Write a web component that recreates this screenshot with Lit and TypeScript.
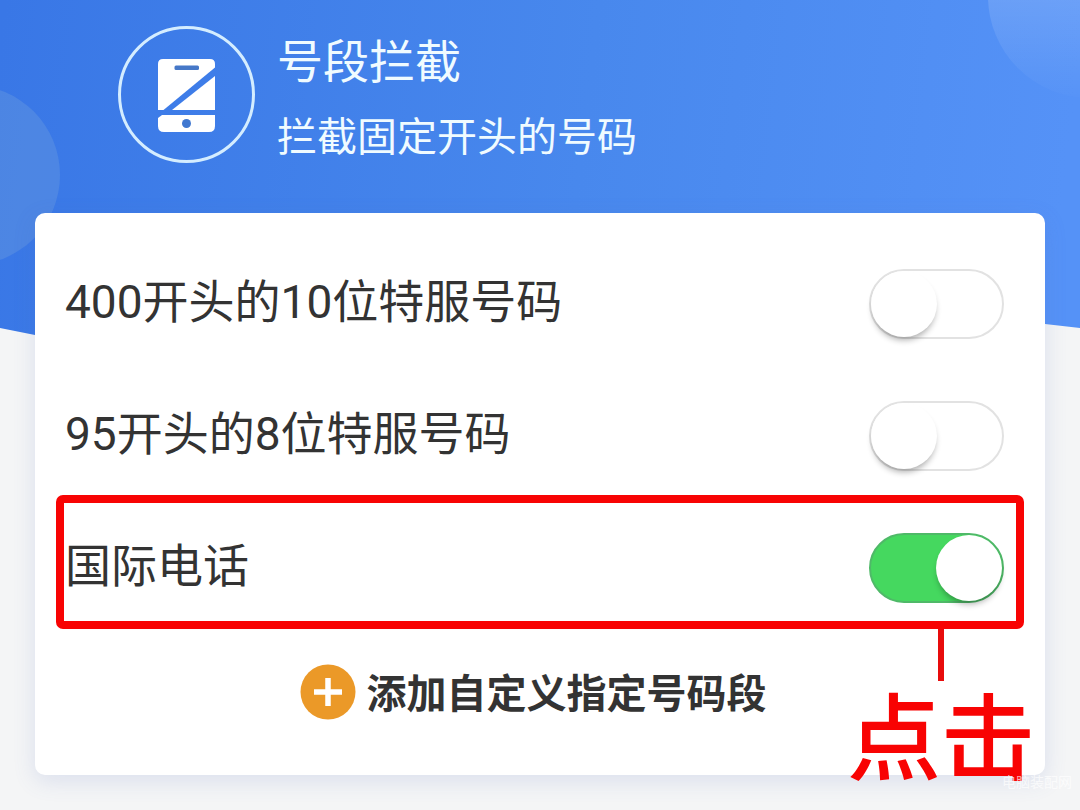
import { LitElement, html, css, svg } from "lit";
import { customElement, property, state } from "lit/decorators.js";

interface Rule {
  id: string;
  label: string;
  on: boolean;
}

@customElement("toggle-row")
class ToggleRow extends LitElement {
  @property() label = "";
  @property({ type: Boolean }) on = false;

  static styles = css`
    :host {
      display: block;
    }
    .row {
      display: flex;
      align-items: center;
      justify-content: space-between;
      height: 132px;
      padding: 0 41px 0 30px;
      cursor: pointer;
    }
    .label {
      padding-bottom: 4px;
      font-size: 46px;
      line-height: 60px;
      color: #333;
    }
    .switch {
      appearance: none;
      display: flex;
      flex: none;
      box-sizing: border-box;
      width: 135px;
      height: 70px;
      margin: 0;
      border: 2px solid #e2e2e2;
      border-radius: 35px;
      background: #fff;
      cursor: pointer;
    }
    .switch::before {
      content: "";
      width: 66px;
      height: 66px;
      border-radius: 50%;
      background: #fff;
      box-shadow: 0 5px 6px -2px rgba(0, 0, 0, 0.32);
    }
    .switch:checked {
      justify-content: flex-end;
      border-color: #4fb968;
      background: #45d85f;
    }
  `;

  private toggle(e: Event) {
    this.on = (e.target as HTMLInputElement).checked;
  }

  render() {
    return html`
      <label class="row">
        <span class="label">${this.label}</span>
        <input class="switch" type="checkbox" role="switch" .checked=${this.on} @change=${this.toggle} />
      </label>
    `;
  }
}

@customElement("app-root")
class AppRoot extends LitElement {
  @state() private rules: Rule[] = [
    { id: "400", label: "400开头的10位特服号码", on: false },
    { id: "95", label: "95开头的8位特服号码", on: false },
    { id: "intl", label: "国际电话", on: true },
  ];

  static styles = css`
    :host {
      display: block;
      font-family: Roboto, "Noto Sans CJK SC", sans-serif;
    }
    .page {
      position: relative;
      box-sizing: border-box;
      min-height: 100vh;
      padding: 26px 35px 35px;
      overflow: hidden;
      background: #f4f5f6;
    }
    .backdrop {
      position: absolute;
      inset: 0 0 auto;
      width: 100%;
      height: 370px;
    }
    .header {
      position: relative;
      display: flex;
      gap: 22px;
      height: 187px;
      padding-left: 83px;
      color: #f0fbff;
    }
    .badge {
      flex: none;
      width: 137px;
      height: 137px;
    }
    .title {
      margin: 6px 0 13px;
      font-size: 46px;
      font-weight: 400;
      line-height: 60px;
    }
    .subtitle {
      margin: 0;
      font-size: 40px;
      line-height: 66px;
    }
    .card {
      position: relative;
      padding: 25px 0 50px;
      border-radius: 10px;
      background: #fff;
      box-shadow: 0 6px 22px rgba(90, 110, 190, 0.16);
    }
    .marked {
      position: relative;
    }
    .marker {
      position: absolute;
      inset: -7px 21px 5px;
      border: 8px solid #f80303;
      border-radius: 7px;
      pointer-events: none;
    }
    .callout {
      position: absolute;
      top: 127px;
      right: 10px;
      display: flex;
      flex-direction: column;
      align-items: center;
      color: #f80303;
      font-size: 94px;
      font-weight: 500;
      line-height: 120px;
      pointer-events: none;
    }
    .callout::before {
      content: "";
      width: 6px;
      height: 52px;
      background: #e80c0c;
    }
    .add {
      display: flex;
      align-items: center;
      gap: 11px;
      margin: 24px auto 0;
      padding: 0 14px 0 0;
      border: 0;
      background: none;
      color: #333;
      font: 700 40px/60px Roboto, "Noto Sans CJK SC", sans-serif;
      cursor: pointer;
    }
    .add-text {
      padding-top: 7px;
    }
    .plus {
      width: 56px;
      height: 56px;
    }
    .watermark {
      position: absolute;
      right: 8px;
      bottom: 18px;
      color: rgba(255, 255, 255, 0.7);
      font-size: 14px;
      line-height: 20px;
    }
  `;

  private backdrop() {
    return html`
      <svg class="backdrop" viewBox="0 0 1080 370" preserveAspectRatio="none" aria-hidden="true">
        <defs>
          <linearGradient id="sky" x1="0" y1="0.1" x2="1" y2="0.14">
            <stop offset="0" stop-color="#3977e6" />
            <stop offset="0.55" stop-color="#4888ed" />
            <stop offset="1" stop-color="#5592f7" />
          </linearGradient>
          <linearGradient id="glow" x1="0" y1="0" x2="0" y2="1">
            <stop offset="0.5" stop-color="#fff" stop-opacity="0.14" />
            <stop offset="1" stop-color="#fff" stop-opacity="0.01" />
          </linearGradient>
        </defs>
        ${svg`
          <path d="M0 0H1080V328L1045 324L540 370L35 335L0 328Z" fill="url(#sky)" />
          <circle cx="-30" cy="175" r="90" fill="#83aedc" fill-opacity="0.26" />
          <circle cx="1090" cy="-4" r="102" fill="url(#glow)" />
        `}
      </svg>
    `;
  }

  render() {
    return html`
      <main class="page">
        ${this.backdrop()}
        <header class="header">
          <svg class="badge" viewBox="0 0 137 137" aria-hidden="true">
            <circle cx="68.5" cy="68.5" r="67" fill="none" stroke="#d4edff" stroke-width="3" />
            <g fill="#fff">
              <path d="M45 33H92Q97 33 97 38V41.500L45.500 84H40V38Q40 33 45 33Z" />
              <path d="M97 50V84H54Z" />
              <path d="M44 89H97V100Q97 106 91 106H46Q40 106 40 100V92Z" />
            </g>
            <rect x="56.5" y="39.5" width="24.5" height="4.5" rx="1.5" fill="#4678c8" />
            <circle cx="68.5" cy="97.5" r="4.5" fill="#4078d0" />
          </svg>
          <div>
            <h1 class="title">号段拦截</h1>
            <p class="subtitle">拦截固定开头的号码</p>
          </div>
        </header>
        <section class="card">
          ${this.rules.map((r) =>
            r.id === "intl"
              ? html`<div class="marked">
                  <toggle-row .label=${r.label} .on=${r.on}></toggle-row>
                  <div class="marker"></div>
                  <div class="callout">点击</div>
                </div>`
              : html`<toggle-row .label=${r.label} .on=${r.on}></toggle-row>`
          )}
          <button class="add" type="button">
            <svg class="plus" viewBox="0 0 56 56" aria-hidden="true">
              <circle cx="28" cy="28" r="27.5" fill="#eb9928" />
              <path d="M28 14V42M14 28H42" stroke="#fff" stroke-width="5.5" />
            </svg>
            <span class="add-text">添加自定义指定号码段</span>
          </button>
        </section>
        <div class="watermark">电脑装配网</div>
      </main>
    `;
  }
}
